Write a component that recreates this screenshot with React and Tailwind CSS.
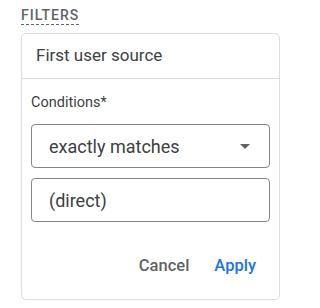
import React from 'react';

const Filters = () => {
  return (
    <div className="w-[296px] h-[308px] bg-white pt-[7px] pl-[21px] font-['Roboto',sans-serif]">
      {/* Section label */}
      <div className="w-fit text-[14px] font-medium tracking-[1px] leading-[16px] text-[#5f6368] border-b border-dashed border-[#5f6368] pb-[1px]">
        FILTERS
      </div>

      {/* Filter card */}
      <div className="mt-[8px] w-[259px] h-[267px] border border-[#dadce0] rounded-[5px] flex flex-col">
        <div className="h-[45px] flex items-center px-[14px] border-b border-[#dadce0] text-[17px] text-[#3c4043]">
          First user source
        </div>

        <div className="px-[9px] pt-[14px] flex flex-col flex-grow">
          <p className="text-[14.5px] text-[#3c4043] leading-[20px]">Conditions*</p>

          <div className="mt-[11px] h-[44px] border border-[#80868b] rounded-[4px] flex items-center justify-between pl-[17px] pr-[19px]">
            <span className="text-[18px] text-[#3c4043]">exactly matches</span>
            <svg width="10" height="5" viewBox="0 0 10 5">
              <path d="M0 0 L10 0 L5 5 Z" fill="#5f6368" />
            </svg>
          </div>

          <div className="mt-[10px] h-[44px] border border-[#80868b] rounded-[4px] flex items-center pl-[17px]">
            <span className="text-[18px] text-[#3c4043]">(direct)</span>
          </div>

          <div className="mt-auto mb-[20px] flex justify-end items-center gap-[25px] pr-[14px]">
            <button className="text-[16.5px] font-medium text-[#5f6368]">Cancel</button>
            <button className="text-[16.5px] font-medium text-[#1a73e8]">Apply</button>
          </div>
        </div>
      </div>
    </div>
  );
};

export default function App() {
  return <Filters />;
}
